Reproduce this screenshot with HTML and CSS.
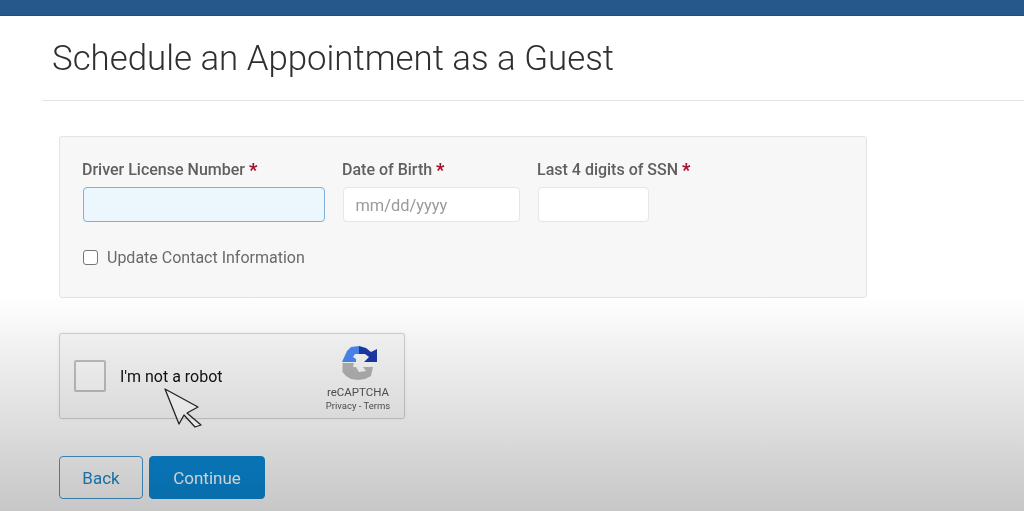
FILE: index.html
```html
<!DOCTYPE html>
<html lang="en">
<head>
<meta charset="utf-8">
<title>Schedule an Appointment as a Guest</title>
<link rel="stylesheet" href="styles.css">
</head>
<body>
<header class="topbar"></header>
<main class="page">
  <h1 class="title">Schedule an Appointment as a Guest</h1>
  <div class="content">
    <section class="panel">
      <div class="fields">
        <div class="field field-dl">
          <label class="label">Driver License Number <span class="req">*</span></label>
          <div class="input input-focus"></div>
        </div>
        <div class="field field-dob">
          <label class="label">Date of Birth <span class="req">*</span></label>
          <div class="input"><span class="placeholder">mm/dd/yyyy</span></div>
        </div>
        <div class="field field-ssn">
          <label class="label">Last 4 digits of SSN <span class="req">*</span></label>
          <div class="input"></div>
        </div>
      </div>
      <div class="check-row">
        <span class="checkbox"></span>
        <span class="check-label">Update Contact Information</span>
      </div>
    </section>
    <section class="captcha">
      <span class="captcha-box"></span>
      <span class="captcha-text">I'm not a robot</span>
      <div class="captcha-brand">
        <svg class="captcha-logo" width="36" height="36" viewBox="0 0 36 36">
          <path fill="#4a8af4" d="M0 17 L5 6 L9 2 L17 1 L17 9 L13 9 L11 12 L14 14 L14 17 Z"/>
          <path fill="#1c3aa9" d="M17 1 L24 3 L29 7 L35 4 L35 17 L22 17 L27 12 L23 9 L17 9 Z"/>
          <path fill="#b4b4b4" d="M0.5 18 L12 18 L11 22 L14 22 L17 27 L24 26 L21 22 L31 22 L29 31 L23 34 L16 35 L9 34 L4 31 L0.5 27 Z"/>
        </svg>
        <span class="captcha-name">reCAPTCHA</span>
        <span class="captcha-links">Privacy - Terms</span>
      </div>
    </section>
    <div class="actions">
      <button class="btn btn-back" type="button">Back</button>
      <button class="btn btn-continue" type="button">Continue</button>
    </div>
  </div>
</main>
<div class="scrim"></div>
<svg class="cursor" width="40" height="42" viewBox="0 0 40 42">
  <path fill="#fff" fill-opacity=".3" stroke="#222" stroke-width="1.3" stroke-linejoin="round" d="M2 2 L35 20 L24 26 L38 38 L32 40 L21 28 L16 37 Z"/>
</svg>
</body>
</html>
```
FILE: styles.css
```css
* { box-sizing: border-box; }
html, body { margin: 0; padding: 0; }
body {
  width: 1024px;
  height: 511px;
  overflow: hidden;
  position: relative;
  background: #fff;
  font-family: Roboto, "Liberation Sans", sans-serif;
}
.topbar {
  height: 16px;
  background: #26588c;
  border-bottom: 1px solid #1f4f85;
}
.page {
  padding-left: 42px;
  filter: blur(.4px);
}
.title {
  margin: 0;
  height: 85px;
  padding: 23px 0 0 10px;
  font-size: 34.8px;
  line-height: 38px;
  font-weight: 300;
  color: #2f2f2f;
  border-bottom: 1px solid #e2e2e2;
}
.content {
  padding: 35px 0 0 17px;
  display: flex;
  flex-direction: column;
  align-items: flex-start;
}
.panel {
  width: 808px;
  height: 162px;
  padding: 23px 22px 0;
  background: #f7f7f7;
  border: 1px solid #e3e3e3;
  border-radius: 3px;
}
.fields { display: flex; gap: 17px; }
.field { display: flex; flex-direction: column; gap: 8px; }
.field-dl { width: 243px; }
.field-dob { width: 178px; }
.field-ssn { width: 112px; }
.label {
  font-size: 16px;
  line-height: 19px;
  font-weight: 500;
  color: #606060;
  white-space: nowrap;
}
.req {
  color: #a5142c;
  font-size: 18px;
  line-height: 0;
  font-weight: 900;
  vertical-align: -1px;
}
.input {
  height: 35px;
  margin-left: .5px;
  background: #fff;
  border: 1px solid #e6e6e6;
  border-radius: 4px;
  padding: 1px 12px 0;
  display: flex;
  align-items: center;
}
.input-focus {
  background: #ebf6fd;
  border: 1.5px solid #80b0dc;
  border-radius: 4px;
}
.placeholder { font-size: 16.4px; color: #9a9a9a; }
.check-row {
  display: flex;
  align-items: center;
  gap: 9px;
  margin-top: 26px;
  margin-left: 1px;
}
.checkbox {
  width: 15px;
  height: 15px;
  background: #fff;
  border: 1px solid #777;
  border-radius: 3px;
}
.check-label { font-size: 16px; color: #6a6a6a; }
.captcha {
  width: 346px;
  height: 86px;
  margin-top: 35px;
  padding: 0 13px 0 14px;
  display: flex;
  align-items: center;
  background: #f9f9f9;
  border: 1px solid #d3d3d3;
  border-radius: 3px;
  box-shadow: 0 0 3px rgba(0,0,0,.08);
}
.captcha-box {
  width: 32px;
  height: 32px;
  background: #fcfcfc;
  border: 2px solid #c1c1c1;
  border-radius: 2px;
}
.captcha-text {
  margin-left: 14px;
  font-size: 16px;
  color: #111;
  flex: 1;
}
.captcha-brand {
  display: flex;
  flex-direction: column;
  align-items: center;
  width: 66px;
  padding-top: 4px;
}
.captcha-logo { display: block; margin: 0 0 4px 3px; }
.captcha-name { font-size: 11.5px; line-height: 14px; color: #555; }
.captcha-links { font-size: 9.5px; line-height: 13px; color: #555; }
.actions { display: flex; gap: 6px; margin-top: 37px; }
.btn {
  height: 43px;
  font-family: Roboto, sans-serif;
  font-size: 17px;
  border-radius: 4px;
  padding: 0;
}
.btn-back {
  width: 84px;
  background: transparent;
  border: 1px solid #4a9ad0;
  color: #2088c8;
}
.btn-continue {
  width: 116px;
  background: #0a8ad8;
  border: 1px solid #0a8ad8;
  color: #fff;
}
.scrim {
  position: absolute;
  left: 0;
  right: 0;
  top: 295px;
  bottom: 0;
  background: linear-gradient(rgba(0,0,0,0), rgba(0,0,0,.22));
  pointer-events: none;
}
.cursor { position: absolute; left: 163px; top: 387px; }
```
